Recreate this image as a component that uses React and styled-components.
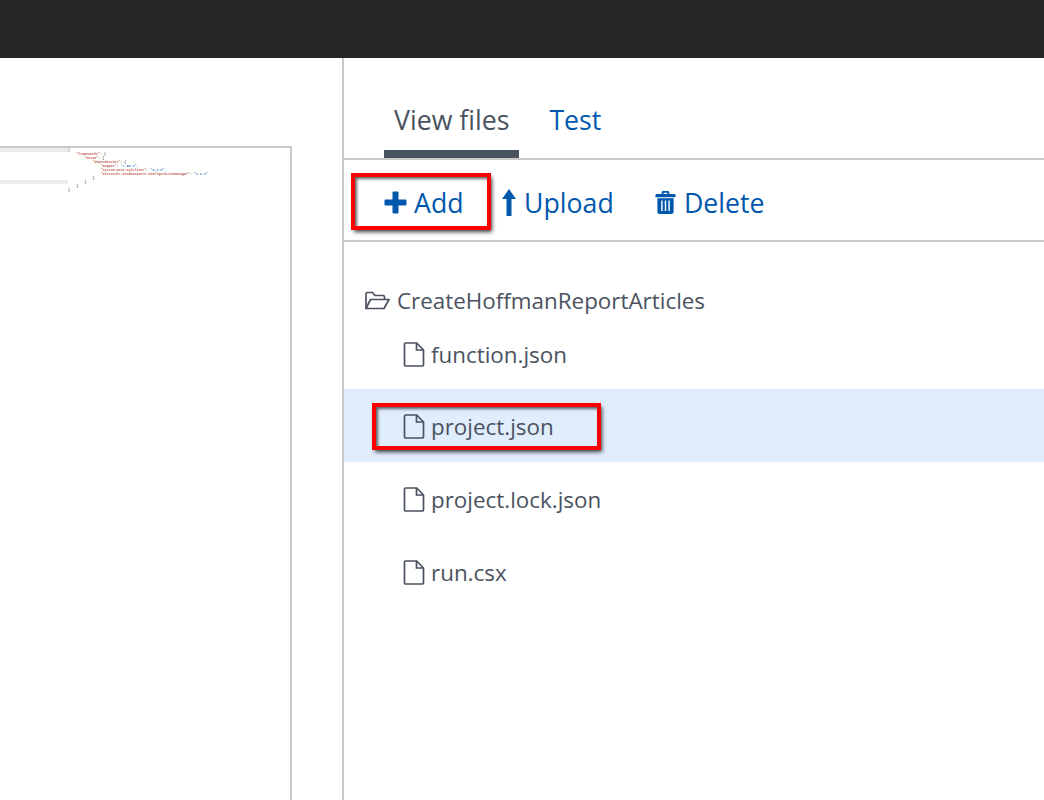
import React from "react";
import styled, { createGlobalStyle } from "styled-components";

const GlobalStyle = createGlobalStyle`
  html, body {
    margin: 0;
    padding: 0;
    background: #fff;
    overflow: hidden;
  }
`;

const codeLines = [
  { indent: 0, key: "{", active: true },
  { indent: 1, key: '"frameworks"', value: ": {" },
  { indent: 2, key: '"net46"', value: ": {" },
  { indent: 3, key: '"dependencies"', value: ": {" },
  { indent: 4, key: '"Dapper"', sep: ": ", str: '"1.50.2",' },
  { indent: 4, key: '"System.Data.SqlClient"', sep: ": ", str: '"4.3.0",' },
  { indent: 4, key: '"Microsoft.WindowsAzure.ConfigurationManager"', sep: ": ", str: '"3.2.3"' },
  { indent: 3, key: "}" },
  { indent: 2, key: "}", active: true },
  { indent: 1, key: "}" },
  { indent: 0, key: "}" },
];

const files = [
  { name: "function.json", height: 71 },
  { name: "project.json", height: 73, selected: true, marked: true },
  { name: "project.lock.json", height: 73 },
  { name: "run.csx", height: 73 },
];

function PlusIcon() {
  return (
    <svg width="23" height="23" viewBox="0 0 23 23">
      <path
        d="M9.500 0.500h4a1 1 0 0 1 1 1V8.500h7a1 1 0 0 1 1 1v4a1 1 0 0 1-1 1h-7v7a1 1 0 0 1-1 1h-4a1 1 0 0 1-1-1v-7h-7a1 1 0 0 1-1-1v-4a1 1 0 0 1 1-1h7V1.500a1 1 0 0 1 1-1z"
        fill="#0058ad"
      />
    </svg>
  );
}

function UpIcon() {
  return (
    <svg width="14" height="27" viewBox="0 0 14 27">
      <path d="M7 0L14 10H9.500v17h-5V10H0z" fill="#0058ad" />
    </svg>
  );
}

function TrashIcon() {
  return (
    <svg width="21" height="25" viewBox="0 0 22 25">
      <path
        d="M7 3.500V2a1.500 1.500 0 0 1 1.500-1.500h5A1.500 1.500 0 0 1 15 2v1.500h5.500a1 1 0 0 1 1 1V7H.5V4.500a1 1 0 0 1 1-1zM9 2.200v1.300h4V2.200z"
        fill="#0058ad"
        fillRule="evenodd"
      />
      <path
        d="M2.500 8h17v14.500a2 2 0 0 1-2 2h-13a2 2 0 0 1-2-2zM6.500 10.500v11h1.500v-11zM10.250 10.500v11h1.500v-11zM14 10.500v11h1.500v-11z"
        fill="#0058ad"
        fillRule="evenodd"
      />
    </svg>
  );
}

function FolderIcon() {
  return (
    <svg width="26" height="19" viewBox="0 0 26 19" fill="none" stroke="#4a5260" strokeWidth="1.700">
      <path d="M2 17.500V3a1.500 1.500 0 0 1 1.500-1.500h5l2.500 3h8a1.500 1.500 0 0 1 1.500 1.500v2.500" />
      <path d="M2 17.500h18L25 8.500H6.500z" strokeLinejoin="round" />
    </svg>
  );
}

function FileIcon() {
  return (
    <svg width="22" height="25" viewBox="0 0 22 25" fill="none" stroke="#4a5260" strokeWidth="1.700">
      <path d="M1.500 2.200A1.200 1.200 0 0 1 2.700 1h11l6.800 7v14.800a1.200 1.200 0 0 1-1.200 1.200H2.700a1.200 1.200 0 0 1-1.200-1.200z" />
      <path d="M13.500 1v7h7" />
    </svg>
  );
}

export default function App() {
  return (
    <Page>
      <GlobalStyle />
      <TopBar />
      <Body>
        <LeftPanel>
          <Editor>
            {codeLines.map((line, i) => (
              <CodeRow key={i}>
                <Gutter $active={line.active} />
                <CodeText $indent={line.indent}>
                  {line.sep || line.value ? <Key>{line.key}</Key> : line.key}
                  {line.value}
                  {line.sep}
                  {line.str && <Str>{line.str}</Str>}
                </CodeText>
              </CodeRow>
            ))}
          </Editor>
        </LeftPanel>
        <RightPanel>
          <Tabs>
            <Tab $active>View files</Tab>
            <Tab>Test</Tab>
          </Tabs>
          <Toolbar>
            <ToolButton $gap={7} $width={118}>
              <PlusIcon />
              Add
              <Callout $left={-32} $top={-10} $width={132} $height={49} />
            </ToolButton>
            <ToolButton $gap={8} $width={153}>
              <UpIcon />
              Upload
            </ToolButton>
            <ToolButton $gap={8}>
              <TrashIcon />
              Delete
            </ToolButton>
          </Toolbar>
          <Tree>
            <FolderRow>
              <FolderIcon />
              CreateHoffmanReportArticles
            </FolderRow>
            {files.map((file) => (
              <FileRow key={file.name} $height={file.height} $selected={file.selected}>
                <FileLabel>
                  <FileIcon />
                  {file.name}
                  {file.marked && <Callout $left={-30} $top={-7} $width={221} $height={39} />}
                </FileLabel>
              </FileRow>
            ))}
          </Tree>
        </RightPanel>
      </Body>
    </Page>
  );
}

const Page = styled.div`
  width: 1044px;
  height: 800px;
  display: flex;
  flex-direction: column;
  overflow: hidden;
  background: #fff;
  font-family: "Open Sans", "Noto Sans", sans-serif;
`;

const TopBar = styled.div`
  height: 58px;
  flex-shrink: 0;
  background: #252525;
`;

const Body = styled.div`
  flex: 1;
  display: flex;
  min-height: 0;
`;

const LeftPanel = styled.div`
  width: 342px;
  flex-shrink: 0;
  border-right: 2px solid #c8c8c8;
  padding-top: 88px;
  background: #fff;
`;

const Editor = styled.div`
  width: 290px;
  height: 100%;
  background: #fffffe;
  border-top: 2px solid #c8c8c8;
  border-right: 2px solid #c8c8c8;
`;

const CodeRow = styled.div`
  display: flex;
  height: 4px;
`;

const Gutter = styled.div`
  width: 68px;
  flex-shrink: 0;
  background: ${(p) => (p.$active ? "#ececec" : "transparent")};
`;

const CodeText = styled.div`
  padding-left: ${(p) => p.$indent * 8.2}px;
  font-family: "Liberation Mono", monospace;
  font-size: 3.3px;
  font-weight: 700;
  line-height: 4px;
  white-space: pre;
  color: #555;
`;

const Key = styled.span`
  color: #c25a5a;
`;

const Str = styled.span`
  color: #4a8bd0;
`;

const RightPanel = styled.div`
  flex: 1;
  min-width: 0;
  display: flex;
  flex-direction: column;
`;

const Tabs = styled.div`
  height: 102px;
  box-sizing: border-box;
  display: flex;
  align-items: stretch;
  padding-left: 40px;
  border-bottom: 2px solid #c8c8c8;
`;

const Tab = styled.div`
  box-sizing: border-box;
  padding: 42px 10px 0;
  margin-right: 20px;
  font-size: 26.700px;
  line-height: 40px;
  color: ${(p) => (p.$active ? "#4a5260" : "#0058ad")};
  border-bottom: ${(p) => (p.$active ? "8px solid #4a5260" : "none")};
`;

const Toolbar = styled.div`
  height: 82px;
  box-sizing: border-box;
  display: flex;
  align-items: center;
  padding: 4px 0 0 40px;
  border-bottom: 2px solid #c8c8c8;
`;

const ToolButton = styled.div`
  position: relative;
  display: flex;
  align-items: center;
  gap: ${(p) => p.$gap}px;
  width: ${(p) => (p.$width ? `${p.$width}px` : "auto")};
  font-size: 26.700px;
  color: #0058ad;
`;

const Callout = styled.div`
  position: absolute;
  left: ${(p) => p.$left}px;
  top: ${(p) => p.$top}px;
  width: ${(p) => p.$width}px;
  height: ${(p) => p.$height}px;
  border: 3px solid #f00;
  outline: 1px solid #f00;
  box-shadow: 2px 3px 4px rgba(0, 0, 0, 0.75), inset 2px 2px 3px rgba(0, 0, 0, 0.6);
  pointer-events: none;
`;

const Tree = styled.div`
  display: flex;
  flex-direction: column;
  padding-top: 40px;
  color: #4a5260;
  font-size: 22.400px;
`;

const FolderRow = styled.div`
  display: flex;
  align-items: center;
  gap: 7px;
  padding-left: 20px;
  height: 36px;
`;

const FileRow = styled.div`
  box-sizing: border-box;
  display: flex;
  align-items: center;
  height: ${(p) => p.$height}px;
  padding: 2px 0 0 59px;
  background: ${(p) => (p.$selected ? "#e0edfc" : "transparent")};
`;

const FileLabel = styled.div`
  position: relative;
  display: flex;
  align-items: center;
  gap: 6px;
`;
